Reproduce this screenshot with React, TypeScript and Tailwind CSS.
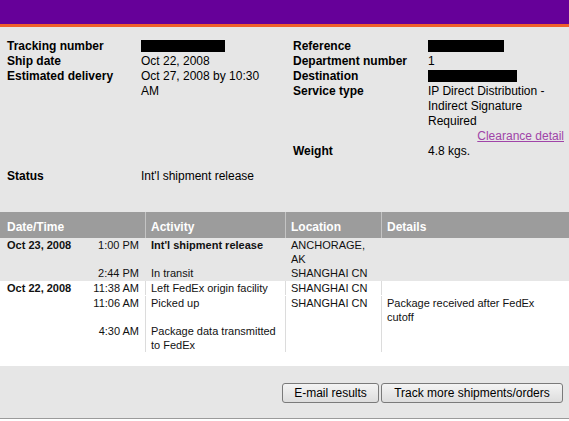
const leftInfo = [
  { label: 'Tracking number', redacted: 84 },
  { label: 'Ship date', value: 'Oct 22, 2008' },
  { label: 'Estimated delivery', value: 'Oct 27, 2008 by 10:30 AM' },
]

const rightInfo = [
  { label: 'Reference', redacted: 76 },
  { label: 'Department number', value: '1' },
  { label: 'Destination', redacted: 89 },
  { label: 'Service type', value: 'IP Direct Distribution - Indirect Signature Required', link: 'Clearance detail' },
  { label: 'Weight', value: '4.8 kgs.' },
]

type Scan = {
  date?: string
  time: string
  activity: string
  bold?: boolean
  location: string
  details?: string
}

const groups: { shaded: boolean; scans: Scan[] }[] = [
  {
    shaded: true,
    scans: [
      { date: 'Oct 23, 2008', time: '1:00 PM', activity: "Int'l shipment release", bold: true, location: 'ANCHORAGE, AK' },
      { time: '2:44 PM', activity: 'In transit', location: 'SHANGHAI CN' },
    ],
  },
  {
    shaded: false,
    scans: [
      { date: 'Oct 22, 2008', time: '11:38 AM', activity: 'Left FedEx origin facility', location: 'SHANGHAI CN' },
      { time: '11:06 AM', activity: 'Picked up', location: 'SHANGHAI CN', details: 'Package received after FedEx cutoff' },
      { time: '4:30 AM', activity: 'Package data transmitted to FedEx', location: '' },
    ],
  },
]

type Row = { label: string; value?: string; redacted?: number; link?: string }

function InfoList({ rows, labelWidth, valueWidth }: { rows: Row[]; labelWidth: string; valueWidth: string }) {
  return (
    <div className="flex flex-col">
      {rows.map((row) => (
        <div key={row.label} className="flex">
          <div className={`${labelWidth} shrink-0 font-bold`}>{row.label}</div>
          <div className={valueWidth}>
            {row.redacted ? (
              <div className="mt-[1px] h-[12px] bg-black" style={{ width: row.redacted }} />
            ) : (
              <div>{row.value}</div>
            )}
            {row.link && (
              <div className="text-right">
                <a href="#" className="text-[#a044a8] underline">
                  {row.link}
                </a>
              </div>
            )}
          </div>
        </div>
      ))}
    </div>
  )
}

const cols = 'grid grid-cols-[145px_140px_96px_188px]'

export default function App() {
  return (
    <div className="h-[421px] w-[569px] overflow-hidden bg-white font-['Liberation_Sans',Arial,sans-serif] text-black">
      <div className="h-[24px] bg-[#660099]" />
      <div className="h-[3px] bg-[#f0602a]" />

      <section className="h-[185px] bg-[#e6e6e6] pt-[12px] text-[12px] leading-[15px]">
        <div className="flex items-start">
          <div className="w-[286px] pl-[7px]">
            <InfoList rows={leftInfo} labelWidth="w-[134px]" valueWidth="w-[132px]" />
          </div>
          <div className="pl-[7px]">
            <InfoList rows={rightInfo} labelWidth="w-[135px]" valueWidth="w-[136px]" />
          </div>
        </div>
        <div className="mt-[10px] flex pl-[7px]">
          <div className="w-[134px] font-bold">Status</div>
          <div>Int'l shipment release</div>
        </div>
      </section>

      <div className={`${cols} h-[26px] bg-[#9c9c9c] text-[12px] font-bold text-white`}>
        <div className="flex h-full items-center pl-[7px] pt-[3px]">Date/Time</div>
        <div className="flex h-full items-center border-l border-[#c4c4c4] pl-[5px] pt-[3px]">Activity</div>
        <div className="flex h-full items-center border-l border-[#c4c4c4] pl-[5px] pt-[3px]">Location</div>
        <div className="flex h-full items-center border-l border-[#c4c4c4] pl-[5px] pt-[3px]">Details</div>
      </div>

      <div className="text-[11px] leading-[14px] text-[#111]">
        {groups.map((group, gi) => (
          <div key={gi} className={group.shaded ? 'bg-[#e6e6e6] pb-[1px]' : 'bg-white'}>
            {group.scans.map((scan, si) => {
              const line = group.shaded ? 'border-[#e6e6e6]' : 'border-[#dcdcdc]'
              return (
                <div key={si} className={`${cols} ${!group.shaded && si === 1 ? 'pt-[1px]' : ''}`}>
                  <div className="flex justify-between pl-[7px] pr-[6px]">
                    <span className="font-bold">{scan.date}</span>
                    <span>{scan.time}</span>
                  </div>
                  <div className={`border-l ${line} pl-[5px] pr-[8px] ${scan.bold ? 'font-bold' : ''}`}>{scan.activity}</div>
                  <div className={`border-l ${line} pl-[5px] pr-[6px]`}>{scan.location}</div>
                  <div className={`border-l ${line} pl-[5px] pr-[24px]`}>{scan.details}</div>
                </div>
              )
            })}
          </div>
        ))}
      </div>

      <div className="h-[14px]" />

      <footer className="flex h-[53px] justify-end gap-[2px] border-b border-[#9a9a9a] bg-[#e6e6e6] pr-[6px] pt-[17px]">
        <button className="h-[20px] w-[97px] rounded-[3px] border border-[#7a7a7a] bg-gradient-to-b from-[#f4f4f4] to-[#dddddd] text-[12px] leading-[18px] text-black">
          E-mail results
        </button>
        <button className="h-[20px] w-[182px] rounded-[3px] border border-[#7a7a7a] bg-gradient-to-b from-[#f4f4f4] to-[#dddddd] text-[12px] leading-[18px] text-black">
          Track more shipments/orders
        </button>
      </footer>
    </div>
  )
}
